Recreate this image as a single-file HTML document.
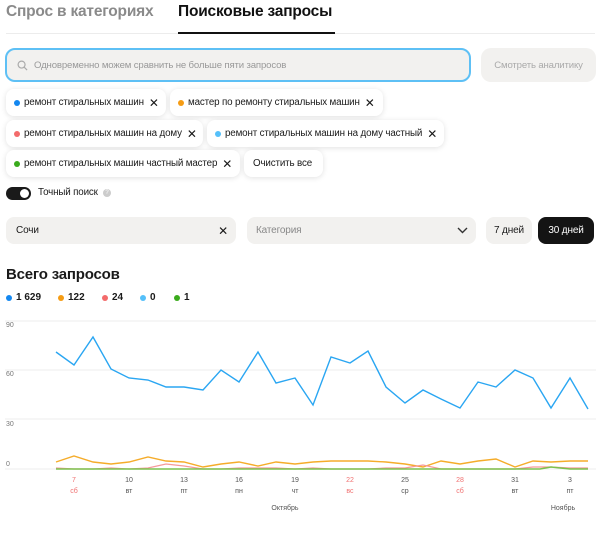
<!DOCTYPE html>
<html><head><meta charset="utf-8"><style>
*{box-sizing:border-box;margin:0;padding:0}
body{width:600px;height:539px;background:#fff;font-family:"Liberation Sans",sans-serif;position:relative;overflow:hidden;color:#1a1a1a}
.a{position:absolute}
.chip{position:absolute;height:27px;background:#fff;border-radius:8px;box-shadow:0 1px 6px rgba(0,0,0,.12);font-size:9.8px;letter-spacing:-0.15px;display:flex;align-items:center;padding-left:8px;white-space:nowrap}
.dot{width:6px;height:6px;min-width:6px;flex-shrink:0;border-radius:50%;display:inline-block;margin-right:4px}
.x{font-size:12px;margin-left:5px}
.box{position:absolute;background:#f2f1ef;border-radius:8px;font-size:10px;display:flex;align-items:center;letter-spacing:-0.15px}
</style></head><body>
<div class="a" style="left:6px;top:3px;font-size:15.5px;font-weight:bold;color:#8a8a8a;letter-spacing:-0.2px">Спрос в категориях</div>
<div class="a" style="left:178px;top:3px;font-size:15.5px;font-weight:bold;color:#111;letter-spacing:-0.2px">Поисковые запросы</div>
<div class="a" style="left:6px;top:33px;width:589px;height:1px;background:#ececec"></div>
<div class="a" style="left:178px;top:32px;width:157px;height:2px;background:#111"></div>

<div class="box" style="left:5px;top:48px;width:466px;height:34px;border:2px solid #5ec0f5;border-radius:10px;color:#999;padding-left:10px;font-size:9.6px">
<svg width="11" height="11" viewBox="0 0 12 12" style="margin-right:6px"><circle cx="5" cy="5" r="3.8" fill="none" stroke="#aaa" stroke-width="1.3"/><path d="M8 8l3 3" stroke="#aaa" stroke-width="1.3"/></svg>Одновременно можем сравнить не больше пяти запросов</div>
<div class="box" style="left:481px;top:48px;width:115px;height:34px;color:#aaa;justify-content:center;border-radius:10px;font-size:9.6px">Смотреть аналитику</div>

<div class="chip" style="left:6px;top:89px;width:160px"><span class="dot" style="background:#1387f0"></span>ремонт стиральных машин<span class="x">✕</span></div>
<div class="chip" style="left:170px;top:89px;width:213px"><span class="dot" style="background:#f59c14"></span>мастер по ремонту стиральных машин<span class="x">✕</span></div>
<div class="chip" style="left:6px;top:120px;width:197px"><span class="dot" style="background:#f36b6b"></span>ремонт стиральных машин на дому<span class="x">✕</span></div>
<div class="chip" style="left:207px;top:120px;width:237px"><span class="dot" style="background:#55c0fa"></span>ремонт стиральных машин на дому частный<span class="x">✕</span></div>
<div class="chip" style="left:6px;top:150px;width:234px"><span class="dot" style="background:#3aab1c"></span>ремонт стиральных машин частный мастер<span class="x">✕</span></div>
<div class="chip" style="left:244px;top:150px;width:79px;padding-left:9px">Очистить все</div>

<div class="a" style="left:6px;top:187px;width:25px;height:13px;border-radius:7px;background:#1a1a1a"></div>
<div class="a" style="left:20px;top:189px;width:9px;height:9px;border-radius:50%;background:#fff"></div>
<div class="a" style="left:38px;top:187px;font-size:9.8px;letter-spacing:-0.15px">Точный поиск</div>
<div class="a" style="left:103px;top:189px;width:8px;height:8px;border-radius:50%;background:#ccc;font-size:6px;color:#fff;text-align:center;line-height:8px">?</div>

<div class="box" style="left:6px;top:217px;width:230px;height:27px;padding-left:10px">Сочи<span style="position:absolute;right:8px;font-size:12px">✕</span></div>
<div class="box" style="left:247px;top:217px;width:229px;height:27px;padding-left:9px;color:#888">Категория<svg style="position:absolute;right:8px" width="11" height="7" viewBox="0 0 11 7"><path d="M1 1l4.5 4.5L10 1" fill="none" stroke="#333" stroke-width="1.4"/></svg></div>
<div class="box" style="left:486px;top:217px;width:46px;height:27px;justify-content:center">7 дней</div>
<div class="box" style="left:538px;top:217px;width:56px;height:27px;justify-content:center;background:#141414;color:#fff">30 дней</div>

<div class="a" style="left:6px;top:266px;font-size:15px;font-weight:bold;letter-spacing:-0.2px">Всего запросов</div>
<div class="a" style="left:6px;top:292px;font-size:10px;font-weight:bold;display:flex;align-items:center">
<span class="dot" style="background:#1387f0"></span><span style="width:42px">1 629</span>
<span class="dot" style="background:#f59c14"></span><span style="width:34px">122</span>
<span class="dot" style="background:#f36b6b"></span><span style="width:28px">24</span>
<span class="dot" style="background:#55c0fa"></span><span style="width:24px">0</span>
<span class="dot" style="background:#3aab1c"></span><span>1</span></div>

<svg class="a" style="left:0;top:310px" width="600" height="229" viewBox="0 310 600 229" font-family="Liberation Sans, sans-serif">
<g stroke="#ececec" stroke-width="1"><line x1="5" y1="321" x2="596" y2="321"/><line x1="5" y1="370" x2="596" y2="370"/><line x1="5" y1="419" x2="596" y2="419"/><line x1="5" y1="469" x2="596" y2="469"/></g>
<g font-size="7" fill="#777"><text x="6" y="327">90</text><text x="6" y="376">60</text><text x="6" y="426">30</text><text x="6" y="466">0</text></g>
<polyline fill="none" stroke="#2aa6f2" stroke-width="1.4" points="56,352 74,365 93,337 111,369 129,378 148,380 166,387 184,387 203,390 221,370 239,382 258,352 276,383 295,378 313,405 331,357 350,363 368,351 386,387 405,403 423,390 441,399 460,408 478,382 496,387 515,370 533,378 551,408 570,378 588,409"/>
<polyline fill="none" stroke="#f5ac2a" stroke-width="1.4" points="56,462 74,456 93,462 111,464 129,462 148,457 166,461 184,462 203,467 221,464 239,462 258,466 276,462 295,464 313,462 331,461 350,461 368,461 386,462 405,464 423,467 441,461 460,464 478,461 496,459 515,467 533,461 551,462 570,461 588,461"/>
<polyline fill="none" stroke="#f59a9a" stroke-width="1.2" points="56,468 74,469 93,469 111,468 129,469 148,468 166,464 184,466 203,469 221,469 239,468 258,468 276,468 295,469 313,468 331,469 350,469 368,469 386,468 405,468 423,465 441,469 460,469 478,469 496,469 515,469 533,467 551,467 570,468 588,468"/>
<polyline fill="none" stroke="#7cc24e" stroke-width="1.6" points="56,469 540,469 551,467 570,469 588,469"/>
<g font-size="7" text-anchor="middle" fill="#555">
<text x="74" y="482" fill="#f07070">7</text><text x="74" y="493" fill="#f07070">сб</text>
<text x="129" y="482">10</text><text x="129" y="493">вт</text>
<text x="184" y="482">13</text><text x="184" y="493">пт</text>
<text x="239" y="482">16</text><text x="239" y="493">пн</text>
<text x="295" y="482">19</text><text x="295" y="493">чт</text>
<text x="350" y="482" fill="#f07070">22</text><text x="350" y="493" fill="#f07070">вс</text>
<text x="405" y="482">25</text><text x="405" y="493">ср</text>
<text x="460" y="482" fill="#f07070">28</text><text x="460" y="493" fill="#f07070">сб</text>
<text x="515" y="482">31</text><text x="515" y="493">вт</text>
<text x="570" y="482">3</text><text x="570" y="493">пт</text>
<text x="285" y="510">Октябрь</text><text x="563" y="510">Ноябрь</text></g>
</svg>
</body></html>
